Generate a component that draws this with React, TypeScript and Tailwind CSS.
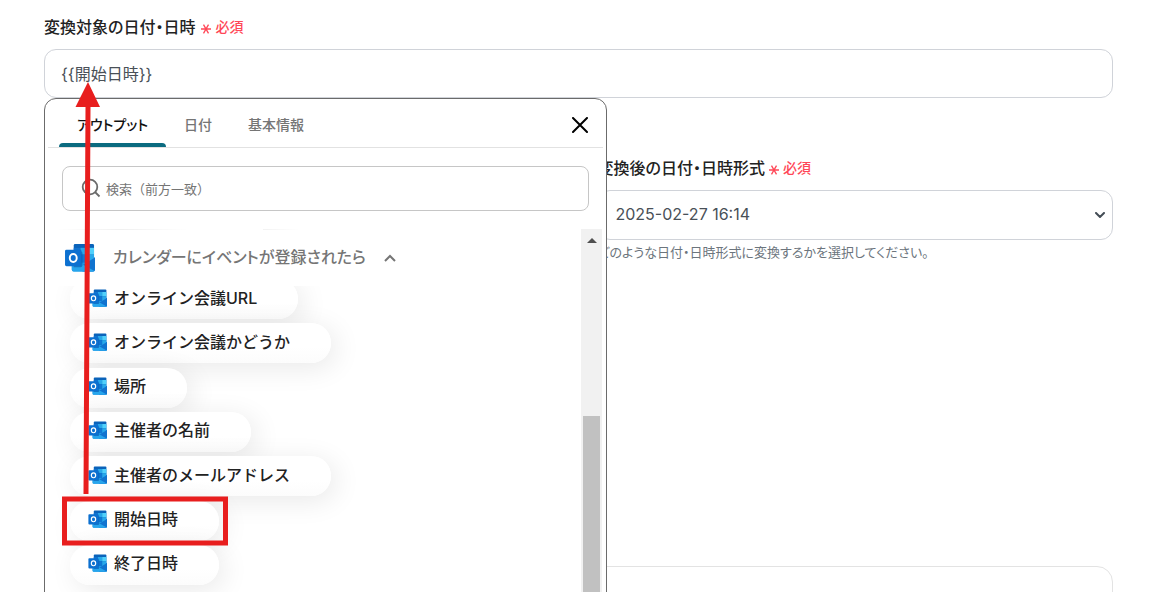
import React from "react";

const options = [
  "オンライン会議URL",
  "オンライン会議かどうか",
  "場所",
  "主催者の名前",
  "主催者のメールアドレス",
  "開始日時",
  "終了日時",
];

function OutlookIcon({ className }: { className: string }) {
  return (
    <svg viewBox="0 0 32 30" className={className} aria-hidden="true">
      <path d="M7 15h24v12.500a2 2 0 0 1-2 2H9a2 2 0 0 1-2-2z" fill="#1d9be8" />
      <rect x="9" y="1" width="21" height="19" rx="1.500" fill="#0a63ba" />
      <rect x="9" y="5" width="7" height="7" fill="#1173d0" />
      <rect x="16" y="5" width="7" height="7" fill="#28a8ea" />
      <rect x="23" y="5" width="7" height="7" fill="#50d0fb" />
      <rect x="16" y="12" width="7" height="8" fill="#0f78d4" />
      <rect x="23" y="12" width="7" height="8" fill="#28a8ea" />
      <path d="M31 15L18 23v6.500h11a2 2 0 0 0 2-2z" fill="#1173cf" />
      <path d="M7 16l23.500 13a2 2 0 0 1-1.500.500H9a2 2 0 0 1-2-2z" fill="#27a5ec" />
      <path d="M9 9h7.500a1.500 1.500 0 0 1 1.500 1.500V23a2 2 0 0 1-2 2H9z" fill="#084b94" fillOpacity=".5" />
      <rect x="0" y="7" width="17" height="17" rx="1.500" fill="#0c70d0" />
      <ellipse cx="8.500" cy="15.500" rx="3.600" ry="4.100" fill="none" stroke="#fff" strokeWidth="2" />
    </svg>
  );
}

function Required() {
  return (
    <span className="flex items-center gap-1 text-sm font-medium text-[#ff4757]">
      <svg viewBox="0 0 10 10" className="mt-1 size-[10px]" aria-hidden="true">
        <path d="M0 5h10M2.500 .7l5 8.600M7.500 .7l-5 8.600" stroke="currentColor" strokeWidth="1.300" />
      </svg>
      必須
    </span>
  );
}

export default function App() {
  return (
    <main className="h-screen overflow-hidden bg-white pr-[37px] pl-11 font-[Inter,'Noto_Sans_CJK_JP',sans-serif] text-[#222]">
      <form className="relative flex flex-col pt-4">
        <div className="flex h-6 items-center gap-[6px] pb-0.5">
          <label htmlFor="target" className="text-base font-medium [font-feature-settings:'palt']">
            変換対象の日付・日時
          </label>
          <Required />
        </div>
        <div className="relative mt-[9px]">
          <input
            id="target"
            defaultValue="{{開始日時}}"
            className="block h-[49px] w-full rounded-xl border border-[#d0d3d9] px-4 pb-0.5 text-base text-[#495057]"
          />
          <section className="absolute top-full left-0 z-10 flex h-[620px] w-[563px] flex-col rounded-t-xl border border-[#6b6b6b] bg-white">
            <header className="mx-[3px] flex h-[49px] items-end justify-between border-b border-[#e2e2e2] pl-[11px]">
              <div role="tablist" className="flex text-sm font-medium text-[#757575] [font-feature-settings:'palt']">
                <button type="button" role="tab" aria-selected="true" className="relative h-[46px] w-[107px] pt-0.5 text-[#111] after:absolute after:inset-x-0 after:bottom-0 after:h-1 after:rounded-t after:bg-[#0b6b80]">
                  アウトプット
                </button>
                <button type="button" role="tab" aria-selected="false" className="h-[46px] px-[18px] pt-0.5">日付</button>
                <button type="button" role="tab" aria-selected="false" className="h-[46px] px-[18px] pt-0.5">基本情報</button>
              </div>
              <button type="button" aria-label="閉じる" className="mr-[15px] mb-[14px]">
                <svg viewBox="0 0 16 16" className="size-4" aria-hidden="true">
                  <path d="M1 1l14 14M15 1L1 15" stroke="#000" strokeWidth="2" strokeLinecap="round" />
                </svg>
              </button>
            </header>
            <div className="relative mx-[17px] mt-[18px]">
              <svg viewBox="0 0 20 20" className="absolute top-3 left-[19px] size-5 text-[#6b6b6b]" aria-hidden="true">
                <circle cx="9" cy="9" r="7.300" fill="none" stroke="currentColor" strokeWidth="1.800" />
                <path d="M14 14l4.500 4.500" stroke="currentColor" strokeWidth="1.800" />
              </svg>
              <input
                aria-label="検索"
                placeholder="検索（前方一致）"
                className="block h-[45px] w-full rounded-lg border border-[#c6c6c6] pl-[43px] text-[13px] placeholder:text-[#757575]"
              />
            </div>
            <div className="mt-[18px] mr-1 flex min-h-0 flex-1">
              <div className="flex-1 overflow-hidden">
                <div className="ml-3 flex h-px justify-between pr-[282px]" aria-hidden="true">
                  <span className="w-[130px] bg-linear-to-r from-white via-[#f0f0f0] to-white" />
                  <span className="w-9 bg-linear-to-r from-[#f2f2f2] to-white" />
                </div>
                <button type="button" className="relative z-10 flex h-14 w-full items-center bg-white pb-0.5 pl-5 text-base font-medium text-[#757575]">
                  <OutlookIcon className="h-[29px] w-[31px]" />
                  <span className="ml-[17px] [font-feature-settings:'palt']">カレンダーにイベントが登録されたら</span>
                  <svg viewBox="0 0 12 8" className="mt-0.5 ml-[18px] h-2 w-3" aria-hidden="true">
                    <path d="M1 7l5-5 5 5" fill="none" stroke="currentColor" strokeWidth="2" />
                  </svg>
                </button>
                <ul className="-mt-[7px] flex h-[306px] flex-col items-start justify-between pl-[25px]">
                  {options.map((name) => (
                    <li key={name}>
                      <button type="button" className="flex h-10 items-center rounded-full bg-linear-to-b from-white from-60% to-[#fcfcfc] pr-[41px] pb-[3px] pl-[18px] text-base font-medium shadow-[5px_5px_28px_rgba(0,0,0,0.09)]">
                        <OutlookIcon className="h-[18px] w-5" />
                        <span className="ml-[6px]">{name}</span>
                      </button>
                    </li>
                  ))}
                </ul>
              </div>
              <div className="flex w-[21px] flex-col items-center bg-[#f1f1f1] pt-[9px]">
                <svg viewBox="0 0 10 5" className="h-[5px] w-[10px]" aria-hidden="true">
                  <path d="M0 5l5-5 5 5z" fill="#505050" />
                </svg>
                <div className="mt-[173px] w-[17px] flex-1 bg-[#c1c1c1]" />
              </div>
            </div>
          </section>
        </div>
        <div className="mt-[58px] grid grid-cols-2 gap-[38px]">
          <div />
          <div>
            <div className="flex h-6 items-center gap-1">
              <label htmlFor="format" className="text-base font-medium [font-feature-settings:'palt']">
                変換後の日付・日時形式
              </label>
              <Required />
            </div>
            <div className="relative mt-[10px]">
              <select id="format" className="block h-[50px] w-full appearance-none rounded-xl border border-[#d0d3d9] px-[17px] pb-0.5 text-base text-[#495057]">
                <option>2025-02-27 16:14</option>
              </select>
              <svg viewBox="0 0 10 6" className="pointer-events-none absolute top-[22px] right-2 h-[6px] w-[10px]" aria-hidden="true">
                <path d="M1 1l4 4 4-4" fill="none" stroke="#444d56" strokeWidth="2" strokeLinecap="round" />
              </svg>
            </div>
            <p className="mt-[2px] text-[13px] leading-5 text-[#6c757d] [font-feature-settings:'palt']">
              どのような日付・日時形式に変換するかを選択してください。
            </p>
          </div>
        </div>
        <div className="mt-[304px] h-20 rounded-2xl border border-[#e3e3e3]" />
        <svg viewBox="0 0 200 600" className="pointer-events-none absolute top-0 left-0 z-20 h-[600px] w-[200px]" aria-hidden="true">
          <path d="M44 82L56 107H46.500L44.500 494H39.500L41.500 107H31.500z" fill="#e81e1e" />
          <rect x="20.500" y="499" width="161" height="44" fill="none" stroke="#e81e1e" strokeWidth="5" />
        </svg>
      </form>
    </main>
  );
}
